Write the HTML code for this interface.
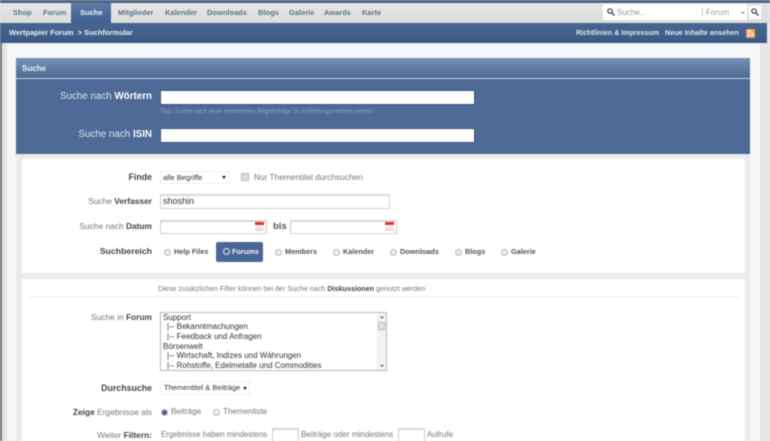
<!DOCTYPE html>
<html><head><meta charset="utf-8"><style>
html,body{margin:0;padding:0;width:770px;height:441px;overflow:hidden;background:#e9e9e9}
#p{position:relative;width:770px;height:441px;overflow:hidden;font-family:"Liberation Sans",sans-serif;filter:blur(.4px)}
#p div,#p span.t{position:absolute;white-space:nowrap}
.t{line-height:12px}
.n{font-size:7.5px;font-weight:bold;color:#5c7190;top:7px}
.l{font-size:8.4px;color:#777;right:618px}
.l b{color:#444}
.big{font-size:9.8px;color:#d9e2ee;right:618px}
.big b{color:#fff}
.g{font-size:8.1px;color:#777}
.r{font-size:7.3px;font-weight:bold;color:#555;top:246px}
.rad{width:5px;height:5px;border:1px solid #bbb;border-radius:50%;background:#eee}
.in{background:#fff;border:1px solid #d2d2d2;box-sizing:border-box;box-shadow:inset 0 1px 1px #ddd}
.lst{font-size:8px;color:#333;left:163px}
.cal{width:9px;height:9px;background:linear-gradient(#d33 0,#d33 35%,#fff 35%,#ecc 100%);border:0}
</style></head><body><div id="p">
<div style="left:0;top:0;width:770px;height:3px;background:#4d6484"></div>
<div style="left:0;top:3px;width:770px;height:20px;background:linear-gradient(#e6e6e6,#dcdcdc)"></div>
<div style="left:71px;top:3px;width:40px;height:20px;background:linear-gradient(#5f7ba3,#3e5f90)"></div>
<span class="t n" style="left:13px">Shop</span>
<span class="t n" style="left:43px">Forum</span>
<span class="t n" style="left:80px;color:#eef3fa">Suche</span>
<span class="t n" style="left:118px">Mitglieder</span>
<span class="t n" style="left:165px">Kalender</span>
<span class="t n" style="left:207px">Downloads</span>
<span class="t n" style="left:258px">Blogs</span>
<span class="t n" style="left:289px">Galerie</span>
<span class="t n" style="left:324px">Awards</span>
<span class="t n" style="left:362px">Karte</span>
<div style="left:603px;top:4px;width:144px;height:16px;background:#fff"></div>
<div style="left:749px;top:6px;width:12px;height:13px;background:#fff"></div>
<svg style="position:absolute;left:607px;top:8px" width="8" height="8" viewBox="0 0 8 8"><circle cx="3" cy="3" r="2.2" fill="none" stroke="#445" stroke-width="1.2"/><path d="M4.7 4.7L7.5 7.5" stroke="#445" stroke-width="1.5"/></svg>
<svg style="position:absolute;left:751px;top:8px" width="8" height="8" viewBox="0 0 8 8"><circle cx="3" cy="3" r="2.2" fill="none" stroke="#445" stroke-width="1.2"/><path d="M4.7 4.7L7.5 7.5" stroke="#445" stroke-width="1.5"/></svg>
<span class="t" style="left:617px;top:7px;font-size:8px;color:#999">Suche...</span>
<div style="left:702px;top:8px;width:1px;height:8px;background:#ccc"></div>
<span class="t" style="left:706px;top:7px;font-size:8px;color:#999">Forum</span>
<div style="left:741px;top:12px;width:0;height:0;border:2px solid transparent;border-top:2px solid #888"></div>
<div style="left:0;top:23px;width:767px;height:20px;background:linear-gradient(#48668f,#3b5a87)"></div>
<span class="t" style="left:9px;top:27px;font-size:7.5px;font-weight:bold;color:#e8eef6">Wertpapier Forum &nbsp;&gt; Suchformular</span>
<span class="t" style="left:576px;top:27px;font-size:7.1px;font-weight:bold;color:#dfe6f0">Richtlinien &amp; Impressum</span>
<span class="t" style="left:665px;top:27px;font-size:7.2px;font-weight:bold;color:#dfe6f0">Neue Inhalte ansehen</span>
<svg style="position:absolute;left:746px;top:29px" width="9" height="9" viewBox="0 0 9 9"><rect width="9" height="9" rx="1" fill="#f0a050"/><circle cx="2.2" cy="6.8" r="1" fill="#fff"/><path d="M1.5 3.8a3.7 3.7 0 0 1 3.7 3.7M1.5 1.5a6 6 0 0 1 6 6" fill="none" stroke="#fff" stroke-width="1"/></svg>
<div style="left:0;top:43px;width:2px;height:398px;background:#777"></div>
<div style="left:2px;top:43px;width:5px;height:398px;background:#e4e4e4"></div>
<div style="left:7px;top:43px;width:753px;height:398px;background:#f6f7f8"></div>
<div style="left:760px;top:43px;width:10px;height:398px;background:#e6e6e6"></div>
<div style="left:16px;top:58px;width:734px;height:20px;background:linear-gradient(#7590b5,#4e6a96)"></div>
<div style="left:16px;top:78px;width:734px;height:1px;background:#c5d2e2"></div>
<span class="t" style="left:22px;top:63px;font-size:8px;font-weight:bold;color:#eef2f8">Suche</span>
<div style="left:16px;top:79px;width:734px;height:75px;background:#4e6a96"></div>
<span class="t big" style="top:91px">Suche nach <b>Wörtern</b></span>
<span class="t big" style="top:129px">Suche nach <b>ISIN</b></span>
<div style="left:161px;top:91px;width:313px;height:13px;background:#fff;box-shadow:0 0 0 1px #3c5480"></div>
<div style="left:161px;top:129px;width:313px;height:13px;background:#fff;box-shadow:0 0 0 1px #3c5480"></div>
<span class="t" style="left:160px;top:106px;font-size:6.1px;color:#8ea3c0">Tipp: Suche nach einer bestimmten Begriffsfolge "in Anführungszeichen setzen"</span>
<div style="left:16px;top:154px;width:734px;height:287px;background:#ebebeb"></div>
<div style="left:22px;top:159px;width:723px;height:114px;background:#fff"></div>
<div style="left:22px;top:279px;width:723px;height:162px;background:#fff"></div>
<span class="t l" style="top:171px"><b style="font-size:8.8px">Finde</b></span>
<div class="in" style="left:160px;top:171px;width:70px;height:13px;border-color:#eee;box-shadow:none"></div>
<span class="t" style="left:163px;top:172px;color:#333;font-size:7.5px">alle Begriffe</span>
<div style="left:222px;top:176px;width:0;height:0;border:2.5px solid transparent;border-top:3px solid #222"></div>
<div style="left:241px;top:173px;width:6px;height:6px;border:1px solid #bbb;background:#ddd"></div>
<span class="t" style="left:254px;top:171px;font-size:8.3px;color:#777">Nur Thementitel durchsuchen</span>
<span class="t l" style="top:195px">Suche <b>Verfasser</b></span>
<div class="in" style="left:160px;top:194px;width:230px;height:15px"></div>
<span class="t" style="left:163px;top:195px;font-size:9px;color:#333">shoshin</span>
<span class="t l" style="top:220px">Suche nach <b>Datum</b></span>
<div class="in" style="left:160px;top:220px;width:107px;height:14px"></div>
<div class="cal" style="left:255px;top:222px"></div>
<span class="t" style="left:273px;top:221px;font-size:9.5px;font-weight:bold;color:#555">bis</span>
<div class="in" style="left:290px;top:220px;width:107px;height:14px"></div>
<div class="cal" style="left:385px;top:222px"></div>
<span class="t l" style="top:245px"><b style="font-size:8.7px">Suchbereich</b></span>
<div style="left:216px;top:242px;width:47px;height:20px;background:#4a6695;border-radius:2px"></div>
<div class="rad" style="left:164px;top:249px"></div><span class="t r" style="left:174px">Help Files</span>
<div class="rad" style="left:223px;top:248px;background:#4a6695;border-color:#dfe6f0"></div><span class="t r" style="left:232px;color:#eef2f8">Forums</span>
<div class="rad" style="left:275px;top:249px"></div><span class="t r" style="left:285px">Members</span>
<div class="rad" style="left:333px;top:249px"></div><span class="t r" style="left:343px">Kalender</span>
<div class="rad" style="left:390px;top:249px"></div><span class="t r" style="left:400px">Downloads</span>
<div class="rad" style="left:455px;top:249px"></div><span class="t r" style="left:465px">Blogs</span>
<div class="rad" style="left:501px;top:249px"></div><span class="t r" style="left:511px">Galerie</span>
<span class="t" style="left:158px;top:283px;font-size:7.2px;color:#777">Diese zusätzlichen Filter können bei der Suche nach <b style="color:#444">Diskussionen</b> genutzt werden</span>
<div style="left:28px;top:296px;width:712px;height:1px;background:#eee"></div>
<span class="t l" style="top:311px">Suche in <b>Forum</b></span>
<div class="in" style="left:160px;top:312px;width:227px;height:59px;border-color:#bbb;box-shadow:none;overflow:hidden"></div>
<div style="left:377px;top:313px;width:9px;height:57px;background:#f1f1f1"></div>
<div style="left:378px;top:322px;width:7px;height:8px;background:#dfe3ea;border:0;box-shadow:0 0 0 1px #bbb inset"></div>
<div style="left:380px;top:316px;width:0;height:0;border:2px solid transparent;border-bottom:2px solid #555;margin-top:-2px"></div>
<div style="left:380px;top:365px;width:0;height:0;border:2px solid transparent;border-top:2px solid #555"></div>
<span class="t lst" style="top:312px">Support</span>
<span class="t lst" style="top:321px;left:167px">|-- Bekanntmachungen</span>
<span class="t lst" style="top:331px;left:167px">|-- Feedback und Anfragen</span>
<span class="t lst" style="top:341px">Börsenwelt</span>
<span class="t lst" style="top:350px;left:167px">|-- Wirtschaft, Indizes und Währungen</span>
<span class="t lst" style="top:360px;left:167px">|-- Rohstoffe, Edelmetalle und Commodities</span>
<span class="t l" style="top:382px"><b style="font-size:8.8px">Durchsuche</b></span>
<div class="in" style="left:160px;top:381px;width:90px;height:14px;border-color:#eee;box-shadow:none"></div>
<span class="t lst" style="left:164px;top:382px;font-size:7.5px">Thementitel &amp; Beiträge</span>
<div style="left:243px;top:387px;width:0;height:0;border:2px solid transparent;border-top:3px solid #222"></div>
<span class="t l" style="top:406px"><b>Zeige</b> Ergebnisse als</span>
<div class="rad" style="left:161px;top:409px;background:#46628f;border-color:#bbb"></div>
<span class="t g" style="left:171px;top:406px">Beiträge</span>
<div class="rad" style="left:213px;top:409px"></div>
<span class="t g" style="left:223px;top:406px">Themenliste</span>
<span class="t l" style="top:429px">Weiter <b>Filtern:</b></span>
<span class="t" style="left:161px;top:429px;font-size:7.9px;color:#777">Ergebnisse haben mindestens</span>
<div class="in" style="left:272px;top:428px;width:27px;height:14px"></div>
<span class="t g" style="left:301px;top:429px">Beiträge oder mindestens</span>
<div class="in" style="left:398px;top:428px;width:27px;height:14px"></div>
<span class="t g" style="left:427px;top:429px">Aufrufe</span>
</div></body></html>
